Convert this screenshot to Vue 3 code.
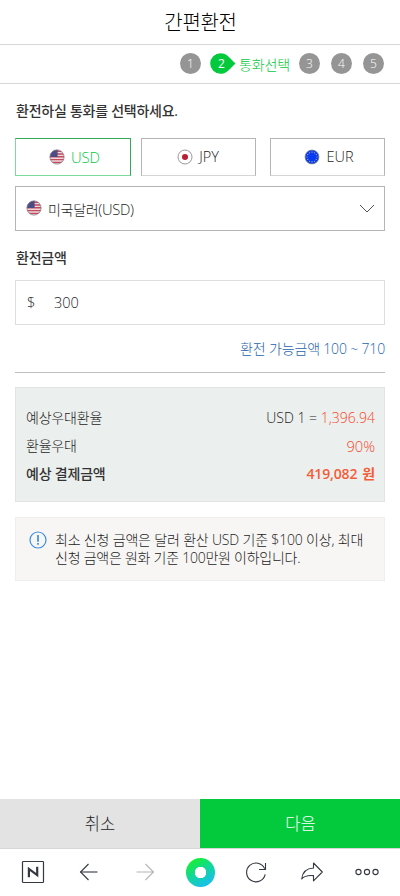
<script setup>
import { h } from 'vue'

const currencies = ['USD', 'JPY', 'EUR']

const stars = Array.from({ length: 12 }, (_, i) => {
  const a = (i * Math.PI) / 6
  return h('circle', { cx: 8 + 4.9 * Math.sin(a), cy: 8 - 4.9 * Math.cos(a), r: 0.55, fill: '#c3cf7a' })
})

const Flag = ({ code }) => {
  if (code === 'USD') {
    return h('svg', { class: 'flag', viewBox: '0 0 16 16', width: 16, height: 16 }, [
      h('clipPath', { id: 'round' }, [h('circle', { cx: 8, cy: 8, r: 7.2 })]),
      h('g', { 'clip-path': 'url(#round)' }, [
        h('path', { d: 'M0 0h16v16H0z', fill: '#f0d9dc' }),
        h('path', { d: 'M0 2.2h16M0 5h16M0 7.8h16M0 10.6h16M0 13.4h16', stroke: '#c24a5c', 'stroke-width': 1.4 }),
        h('path', { d: 'M0 0h8.6v8H0z', fill: '#4b4c83' }),
      ]),
      h('circle', { cx: 8, cy: 8, r: 7.1, fill: 'none', stroke: '#8c8088', 'stroke-width': 0.8 }),
    ])
  }
  if (code === 'JPY') {
    return h('svg', { class: 'flag', viewBox: '0 0 16 16', width: 16, height: 16 }, [
      h('circle', { cx: 8, cy: 8, r: 7, fill: '#fff', stroke: '#999', 'stroke-width': 1 }),
      h('circle', { cx: 8, cy: 8, r: 3, fill: '#b81f35' }),
    ])
  }
  return h('svg', { class: 'flag', viewBox: '0 0 16 16', width: 16, height: 16 }, [
    h('circle', { cx: 8, cy: 8, r: 6.9, fill: '#0b3bf0', stroke: '#69748f', 'stroke-width': 0.8 }),
    ...stars,
  ])
}
</script>

<template>
  <div class="page">
    <header class="title"><h1>간편환전</h1></header>

    <div class="steps">
      <span class="dot">1</span>
      <span class="current">
        <svg width="26" height="21" viewBox="0 0 26 21"><path d="M10.5 0.2A10.3 10.3 0 1 0 10.5 20.8C16 20.8 18 18 25.5 10.5C18 3 16 0.2 10.5 0.2Z" fill="#03c93d" /></svg>
        <b>2</b>
      </span>
      <span class="step-name">통화선택</span>
      <span class="dot">3</span>
      <span class="dot">4</span>
      <span class="dot">5</span>
    </div>

    <main>
      <h2 class="ask">환전하실 통화를 선택하세요.</h2>
      <div class="tabs">
        <button v-for="(c, i) in currencies" :key="c" class="tab" :class="{ active: i === 0 }">
          <Flag :code="c" /><span>{{ c }}</span>
        </button>
      </div>

      <div class="select">
        <Flag code="USD" />
        <span class="name">미국달러<span class="latin">(USD)</span></span>
        <svg width="16" height="10" viewBox="0 0 16 10"><path d="M1 1L8 8L15 1" fill="none" stroke="#555" /></svg>
      </div>

      <h2 class="amount-title">환전금액</h2>
      <div class="amount"><span class="sign">$</span><span class="value">300</span></div>
      <p class="limit">환전 가능금액 100 ~ 710</p>

      <dl class="summary">
        <div><dt>예상우대환율</dt><dd class="rate">USD 1 = <em>1,396.94</em></dd></div>
        <div><dt>환율우대</dt><dd class="percent"><em>90%</em></dd></div>
        <div class="total"><dt>예상 결제금액</dt><dd><em>419,082 원</em></dd></div>
      </dl>

      <div class="notice">
        <svg width="18" height="18" viewBox="0 0 18 18" fill="none" stroke="#3b8ddd">
          <circle cx="9" cy="9" r="8" stroke-width="1.2" />
          <path d="M9 4V10.8M9 12.1V13.8" stroke-width="1.7" />
        </svg>
        <p><span class="first">최소 신청 금액은 달러 환산 USD 기준 $100 이상, 최대</span><br />신청 금액은 원화 기준 100만원 이하입니다.</p>
      </div>
    </main>

    <div class="actions">
      <button class="cancel">취소</button>
      <button class="next">다음</button>
    </div>

    <nav class="browser">
      <svg viewBox="0 0 24 24" width="24" height="24">
        <rect x="1.5" y="1.5" width="21" height="21" rx="0.8" fill="none" stroke="#343840" stroke-width="1.2" />
        <path d="M7.9 17.2V8.9L16.2 15.1V6.8" fill="none" stroke="#343840" stroke-width="2.2" />
      </svg>
      <svg viewBox="0 0 20 18" width="20" height="18" fill="none" stroke="#343840"><path d="M9.5 1L1.5 9L9.5 17" stroke-width="1.1" /><path d="M1.5 9H18.5" stroke-width="1.1" /></svg>
      <svg viewBox="0 0 20 18" width="20" height="18" fill="none" stroke="#b5b5b5" stroke-width="1.1"><path d="M10.5 1L18.5 9L10.5 17M18.5 9H1.5" /></svg>
      <span class="ring"></span>
      <svg viewBox="0 0 22 22" width="22" height="22" fill="none" stroke="#343840" stroke-width="1.1"><path d="M20.2 13.3A9.4 9.4 0 1 1 19.6 7.6M20.5 2V8.5H14" /></svg>
      <svg viewBox="0 0 24 22" width="24" height="22" fill="none" stroke="#343840" stroke-width="1.1" stroke-linejoin="round"><path d="M13.5 2L22.3 11L13.5 19.8V14.6C8 14.1 4.5 14.7 1.7 18C2.3 12 6 7.4 13.5 7Z" /></svg>
      <svg viewBox="0 0 24 8" width="24" height="8" fill="none" stroke="#343840" stroke-width="1.1"><circle cx="3.5" cy="4" r="2.6" /><circle cx="12" cy="4" r="2.6" /><circle cx="20.5" cy="4" r="2.6" /></svg>
    </nav>
  </div>
</template>

<style>
body {
  background: #fff;
}
</style>

<style scoped>
.page {
  display: flex;
  flex-direction: column;
  width: 400px;
  height: 896px;
  overflow: hidden;
  box-sizing: border-box;
  background: #fff;
  color: #1c1c1c;
  font: 300 14px/20px "Open Sans", "Noto Sans CJK KR", sans-serif;
}
.page * {
  box-sizing: border-box;
}
h1, h2, p, dl, dd {
  margin: 0;
}
svg {
  display: block;
  flex: none;
}
button {
  font: inherit;
  color: inherit;
  padding: 0;
  border: 0;
}
.title {
  height: 45px;
  flex: none;
  border-bottom: 1px solid #d8d8d8;
  text-align: center;
}
h1 {
  padding-left: 1px;
  font-size: 20px;
  line-height: 45px;
  font-weight: 300;
  letter-spacing: -0.3px;
  color: #000;
}
.steps {
  display: flex;
  flex: none;
  align-items: center;
  justify-content: flex-end;
  height: 39px;
  padding: 0 16px 1px 0;
  border-bottom: 1px solid #d8d8d8;
}
.dot {
  width: 21px;
  height: 21px;
  border-radius: 50%;
  background: #959595;
  color: #fff;
  font-size: 12px;
  line-height: 22px;
  text-align: center;
}
.dot + .dot {
  margin-left: 11px;
}
.current {
  display: grid;
  margin: 0 3px 0 9px;
}
.current svg,
.current b {
  grid-area: 1 / 1;
}
.current b {
  width: 23px;
  color: #fff;
  font-weight: 400;
  font-size: 12px;
  line-height: 22px;
  text-align: center;
}
.step-name {
  width: 60px;
  padding-top: 3px;
  color: #03c93d;
  letter-spacing: -0.15px;
}
main {
  flex: 1;
  padding: 0 15px;
}
h2 {
  padding-left: 1px;
  font-size: 14px;
  line-height: 20px;
  font-weight: 500;
  color: #333;
}
.ask {
  padding-top: 17px;
  letter-spacing: -0.25px;
}
.tabs {
  display: grid;
  grid-template-columns: 116px 115px 115px;
  column-gap: 10px;
  margin-top: 17px;
}
.tab {
  display: flex;
  align-items: center;
  justify-content: center;
  gap: 6px;
  height: 38px;
  background: #fff;
  border: 1px solid #b5b5b5;
  border-bottom-color: #d5d5d5;
  font-size: 14.5px;
}
.tab:nth-child(2) {
  padding-right: 1px;
}
.tab:last-child {
  margin: 0 -4px 0 4px;
  padding-left: 3px;
}
.tab.active {
  padding-left: 3px;
  border-color: #31a956 #31a956 #7bdb9b #7bdb9b;
  color: #03c93d;
  font-size: 14.8px;
}
.select {
  display: flex;
  align-items: center;
  height: 45px;
  margin-top: 10px;
  padding: 0 9px 0 10px;
  border: 1px solid #b5b5b5;
}
.select .flag {
  margin-top: -2px;
}
.name {
  flex: 1;
  padding: 2px 0 0 6px;
  letter-spacing: -0.3px;
}
.latin {
  font-size: 14.7px;
}
.amount-title {
  margin-top: 17px;
  letter-spacing: -0.2px;
}
.amount {
  display: flex;
  align-items: center;
  height: 45px;
  margin-top: 12px;
  padding-left: 11px;
  border: 1px solid #dedede;
}
.sign {
  width: 27px;
}
.sign,
.value {
  font-size: 14.5px;
}
.limit {
  height: 48px;
  padding-top: 14px;
  border-bottom: 1px solid #bebebe;
  color: #2563ad;
  text-align: right;
  letter-spacing: -0.17px;
}
.summary {
  height: 115px;
  margin-top: 14px;
  padding: 16px 9px 0 10px;
  background: #ebefee;
  border: 1px solid #e2e4e3;
}
.summary div {
  display: flex;
  justify-content: space-between;
  line-height: 28px;
}
.summary dt {
  letter-spacing: -0.2px;
}
.percent {
  font-size: 14.7px;
}
em {
  color: #f5492a;
  font-style: normal;
}
.total {
  font-weight: 500;
  color: #333;
}
.total em {
  color: #f45c38;
  font-weight: 600;
  letter-spacing: -0.15px;
  word-spacing: 1.5px;
}
.notice {
  display: flex;
  height: 64px;
  margin-top: 15px;
  padding: 13px 0 0 13px;
  border: 1px solid #efeeec;
  background: #f7f6f4;
}
.notice p {
  padding-left: 8px;
  line-height: 18px;
  letter-spacing: -0.25px;
  white-space: nowrap;
}
.first {
  letter-spacing: -0.18px;
}
.actions {
  display: grid;
  grid-template-columns: 1fr 1fr;
  height: 49px;
  flex: none;
  font-size: 16.5px;
}
.cancel,
.next {
  padding-top: 1px;
}
.cancel {
  background: #e3e3e3;
}
.next {
  padding-left: 1px;
  background: #03c93d;
  color: #fff;
}
.browser {
  display: grid;
  grid-template-columns: 57px 56px 56px 55px 56px 55px 1fr;
  align-items: center;
  justify-items: center;
  height: 48px;
  flex: none;
  padding: 0 5px 1px 4px;
  border-top: 1px solid #d5d8d7;
}
.ring {
  width: 29px;
  height: 29px;
  border-radius: 50%;
  background: radial-gradient(circle, #fff 5.5px, transparent 6px), linear-gradient(150deg, #16ee38 15%, #12d5a0 50%, #1bbdf3 88%);
}
</style>
